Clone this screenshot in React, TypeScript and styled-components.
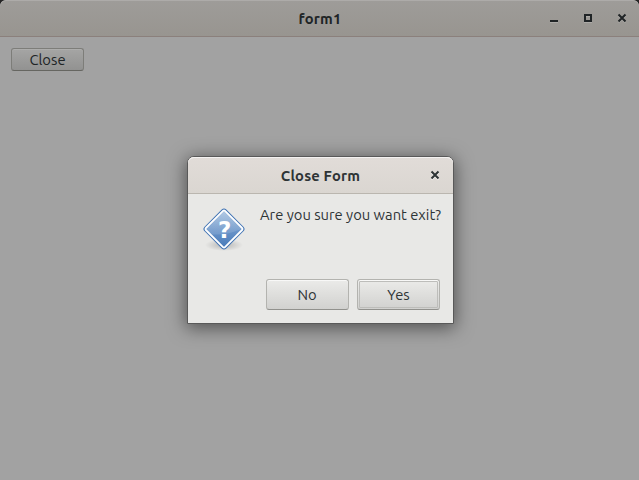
import React from "react";
import styled, { createGlobalStyle } from "styled-components";

const GlobalStyle = createGlobalStyle`
  * { box-sizing: border-box; }
  html, body { margin: 0; padding: 0; background: #242424; overflow: hidden; }
  body, button { font-family: Ubuntu, "Noto Sans", sans-serif; font-size: 14.75px; color: #2e3436; }
`;

const Window = styled.main`
  position: relative;
  width: 639px;
  height: 480px;
  display: flex;
  flex-direction: column;
  background: #a2a2a2;
  border-radius: 6px 6px 0 0;
  overflow: hidden;
`;

const TitleBar = styled.header<{ $dialog?: boolean }>`
  flex: none;
  display: grid;
  grid-template-columns: 1fr auto 1fr;
  align-items: center;
  height: 37px;
  padding: 0 ${(p) => (p.$dialog ? 13 : 12)}px;
  background: ${(p) =>
    p.$dialog
      ? "linear-gradient(#e1dcd8, #dad6d1)"
      : "linear-gradient(#9e9c99, #989590)"};
  border-bottom: 1px solid ${(p) => (p.$dialog ? "#bab6af" : "#8b807c")};
  box-shadow: inset 0 1px ${(p) => (p.$dialog ? "#f4f2f1" : "#adaba9")};
  border-radius: 6px 6px 0 0;
`;

const Title = styled.h1<{ $dialog?: boolean }>`
  grid-column: 2;
  margin: 0;
  padding: 1px 0 0 ${(p) => (p.$dialog ? 0 : 1)}px;
  font-size: 14.75px;
  font-weight: 700;
  line-height: 20px;
  white-space: nowrap;
  letter-spacing: 0.17px;
  color: ${(p) => (p.$dialog ? "#2e3436" : "#202426")};
`;

const Controls = styled.div`
  display: flex;
  justify-content: flex-end;
  gap: 24px;
`;

const Control = styled.button`
  display: block;
  width: 10px;
  height: 11px;
  padding: 0;
  border: 0;
  background: none;
  svg { display: block; }
`;

const Content = styled.section`
  padding: 11px;
  display: flex;
`;

const FormButton = styled.button`
  width: 73px;
  height: 23px;
  padding: 1px 0 0;
  line-height: 20px;
  color: #202426;
  border: 1px solid #7d7d79;
  border-bottom-color: #666661;
  border-radius: 3px;
  background: linear-gradient(#a5a5a4, #929291);
  box-shadow: inset 0 1px #adadac;
`;

const Dialog = styled.div`
  position: absolute;
  left: 187px;
  top: 156px;
  width: 267px;
  height: 168px;
  display: flex;
  flex-direction: column;
  background: #e8e8e6;
  border: 1px solid #595959;
  border-radius: 7px 7px 0 0;
  box-shadow: 0 3px 18px 1px rgba(0, 0, 0, 0.5);
`;

const Message = styled.div`
  flex: 1;
  display: flex;
  padding: 11px 0 0 14px;
  gap: 14px;

  svg { margin-top: 2px; }
`;

const MessageText = styled.p`
  margin: 0;
  line-height: 20px;
  white-space: nowrap;
`;

const Actions = styled.footer`
  display: flex;
  justify-content: flex-end;
  gap: 8px;
  padding: 0 13px 13px 0;
`;

const ActionButton = styled.button<{ $focused?: boolean }>`
  width: 83px;
  height: 31px;
  padding: ${(p) => (p.$focused ? "1px" : "1px 1px 0 0")};
  line-height: 20px;
  border: 1px solid #b3b3af;
  border-bottom-color: #91918d;
  border-radius: 3px;
  background: linear-gradient(#ebebe9, #d1d1cf);
  box-shadow: inset 0 1px #f8f8f7;
`;

const FocusRing = styled.span`
  display: flex;
  align-items: center;
  justify-content: center;
  height: 27px;
  border: 1px solid #bdbdba;
  border-radius: 1px;
`;

function MinimizeIcon() {
  return (
    <svg width="10" height="11" shapeRendering="crispEdges">
      <path d="M1 7h8v2H1z" fill="#202426" />
      <path d="M1 9h8v1H1z" fill="#adaba8" />
    </svg>
  );
}

function MaximizeIcon() {
  return (
    <svg width="10" height="11" shapeRendering="crispEdges">
      <path d="M1 9h8v1H1z" fill="#adaba8" />
      <path d="M2 2h6v6H2z" fill="none" stroke="#202426" strokeWidth="2" />
      <path d="M3 3h4v1H3z" fill="#adaba8" />
    </svg>
  );
}

function CloseIcon({ light }: { light?: boolean }) {
  return (
    <svg width="10" height="11" fill="none" strokeWidth="2">
      <path d="M1.5 2.5l7 7M8.5 2.5l-7 7" stroke={light ? "#f6f4f2" : "#adaba8"} />
      <path d="M1.5 1.5l7 7M8.5 1.5l-7 7" stroke={light ? "#2e3436" : "#202426"} />
    </svg>
  );
}

function QuestionIcon() {
  return (
    <svg width="44" height="48" viewBox="0 0 44 48">
      <defs>
        <linearGradient id="face" x1="0" y1="0" x2="1" y2="1">
          <stop offset="0" stopColor="#9dbbdd" />
          <stop offset="0.55" stopColor="#6893c8" />
          <stop offset="1" stopColor="#4a7cba" />
        </linearGradient>
        <linearGradient id="gloss" x1="0" y1="0" x2="0" y2="1">
          <stop offset="0" stopColor="#fff" stopOpacity="0.2" />
          <stop offset="1" stopColor="#fff" stopOpacity="0.12" />
        </linearGradient>
        <radialGradient id="shade">
          <stop offset="0" stopColor="#000" stopOpacity="0.22" />
          <stop offset="1" stopColor="#000" stopOpacity="0" />
        </radialGradient>
      </defs>
      <ellipse cx="22" cy="38" rx="19" ry="6" fill="url(#shade)" />
      <rect x="7.1" y="7.1" width="29.8" height="29.8" rx="2.8" transform="rotate(45 22 22)" fill="#fff" stroke="#3f72b3" />
      <rect x="9.4" y="9.4" width="25.2" height="25.2" rx="0.5" transform="rotate(45 22 22)" fill="url(#face)" />
      <path d="M4.6 22L22 4.6 39.4 22c-7 2.5-12 5-24 5.5H10z" fill="url(#gloss)" />
      <text x="22.6" y="31" textAnchor="middle" fontFamily="DejaVu Sans, sans-serif" fontSize="23" fontWeight="700" fill="#fff">?</text>
    </svg>
  );
}

export default function App() {
  return (
    <>
      <GlobalStyle />
      <Window>
        <TitleBar>
          <Title>form1</Title>
          <Controls>
            <Control aria-label="Minimize"><MinimizeIcon /></Control>
            <Control aria-label="Maximize"><MaximizeIcon /></Control>
            <Control aria-label="Close window"><CloseIcon /></Control>
          </Controls>
        </TitleBar>
        <Content>
          <FormButton>Close</FormButton>
        </Content>
        <Dialog role="dialog" aria-label="Close Form">
          <TitleBar $dialog>
            <Title $dialog>Close Form</Title>
            <Controls>
              <Control aria-label="Close dialog"><CloseIcon light /></Control>
            </Controls>
          </TitleBar>
          <Message>
            <QuestionIcon />
            <MessageText>Are you sure you want exit?</MessageText>
          </Message>
          <Actions>
            <ActionButton>No</ActionButton>
            <ActionButton $focused><FocusRing>Yes</FocusRing></ActionButton>
          </Actions>
        </Dialog>
      </Window>
    </>
  );
}
